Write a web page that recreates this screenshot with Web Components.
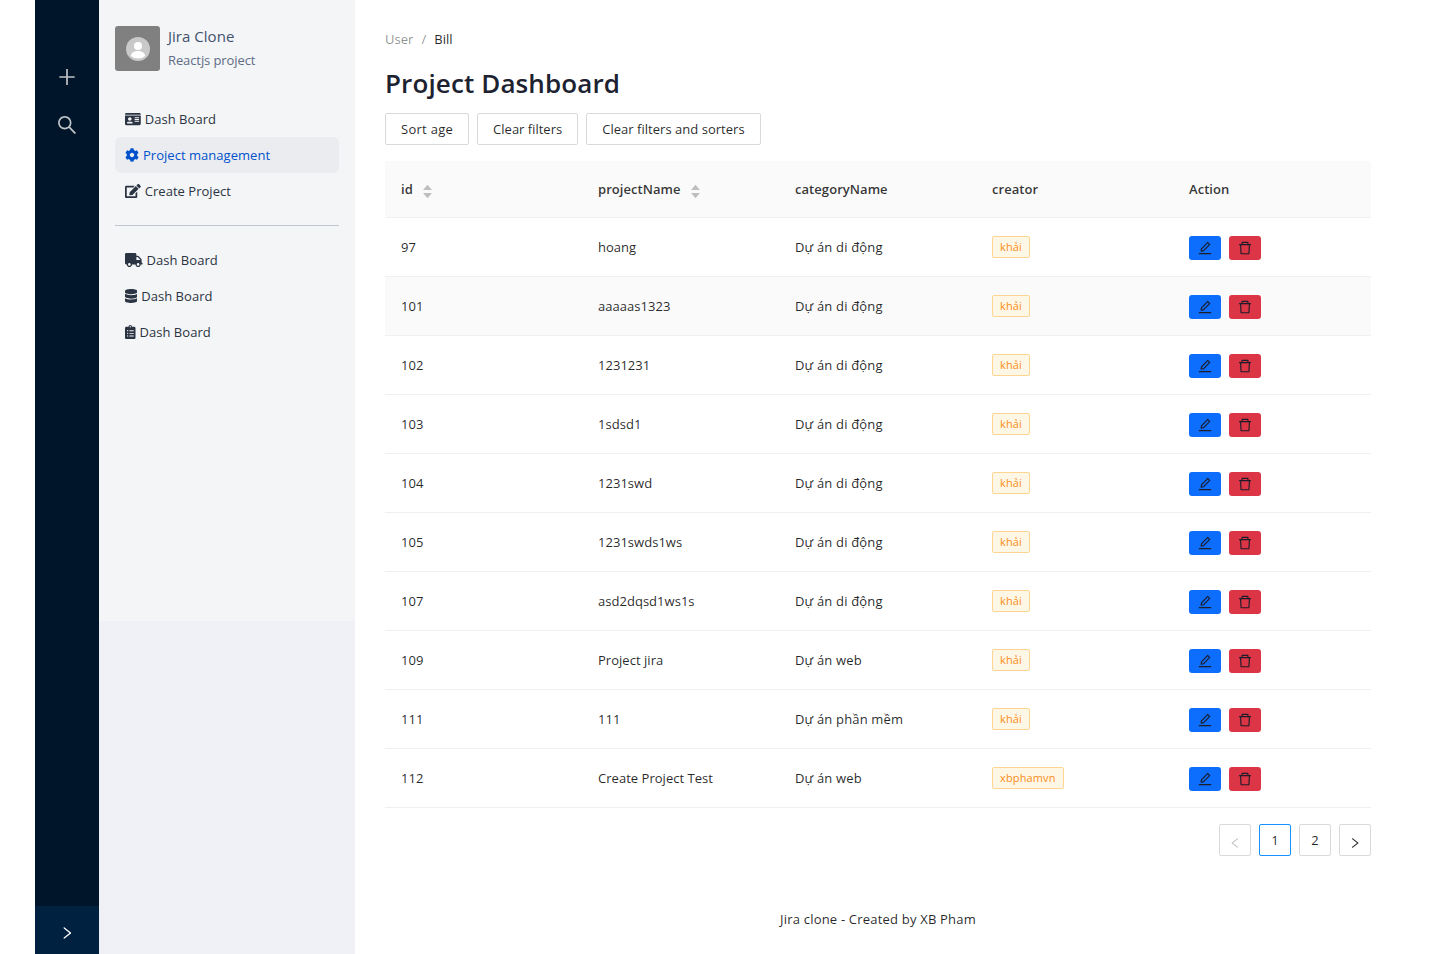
<!DOCTYPE html>
<html lang="vi">
<head>
<meta charset="utf-8">
<title>Jira Clone</title>
<style>
  html, body { margin: 0; height: 100%; background: #fff; }
  body { font-family: "Open Sans", "Noto Sans", sans-serif; font-size: 13px; letter-spacing: .03px; color: rgba(0,0,0,.85); }
</style>
</head>
<body>
<app-shell>
  <icon-rail slot="rail"></icon-rail>
  <side-panel slot="panel"></side-panel>
  <project-dashboard></project-dashboard>
</app-shell>

<script>
const ICONS = {
  idCard: ["0 0 576 512", "M528 32H48C21.5 32 0 53.5 0 80v16h576V80c0-26.5-21.5-48-48-48zM0 432c0 26.5 21.5 48 48 48h480c26.5 0 48-21.5 48-48V128H0v304zm352-232c0-4.4 3.6-8 8-8h144c4.4 0 8 3.6 8 8v16c0 4.4-3.6 8-8 8H360c-4.4 0-8-3.6-8-8v-16zm0 64c0-4.4 3.6-8 8-8h144c4.4 0 8 3.6 8 8v16c0 4.4-3.6 8-8 8H360c-4.4 0-8-3.6-8-8v-16zm0 64c0-4.4 3.6-8 8-8h144c4.4 0 8 3.6 8 8v16c0 4.4-3.6 8-8 8H360c-4.4 0-8-3.6-8-8v-16zM176 192c35.3 0 64 28.7 64 64s-28.7 64-64 64-64-28.7-64-64 28.7-64 64-64zM67.1 396.2C75.5 370.5 99.6 352 128 352h8.2c12.3 5.1 25.7 8 39.8 8s27.6-2.9 39.8-8h8.2c28.4 0 52.5 18.5 60.9 44.2 3.2 9.9-5.2 19.8-15.6 19.8H82.7c-10.4 0-18.8-10-15.6-19.8z"],
  cog: ["0 0 512 512", "M487.4 315.7l-42.6-24.6c4.3-23.2 4.3-47 0-70.2l42.6-24.6c4.9-2.8 7.1-8.6 5.5-14-11.1-35.6-30-67.8-54.7-94.6-3.8-4.1-10-5.1-14.8-2.3L380.8 110c-17.9-15.4-38.5-27.3-60.8-35.1V25.8c0-5.6-3.9-10.5-9.4-11.7-36.7-8.2-74.3-7.8-109.2 0-5.5 1.2-9.4 6.1-9.4 11.7V75c-22.2 7.9-42.8 19.8-60.8 35.1L88.7 85.5c-4.9-2.8-11-1.9-14.8 2.3-24.7 26.7-43.6 58.9-54.7 94.6-1.7 5.4.6 11.2 5.5 14L67.3 221c-4.3 23.2-4.3 47 0 70.2l-42.6 24.6c-4.9 2.8-7.1 8.6-5.5 14 11.1 35.6 30 67.8 54.7 94.6 3.8 4.1 10 5.1 14.8 2.3l42.6-24.6c17.9 15.4 38.5 27.3 60.8 35.1v49.2c0 5.6 3.9 10.5 9.4 11.7 36.7 8.2 74.3 7.8 109.2 0 5.5-1.2 9.4-6.1 9.4-11.7v-49.2c22.2-7.9 42.8-19.8 60.8-35.1l42.6 24.6c4.9 2.8 11 1.9 14.8-2.3 24.7-26.7 43.6-58.9 54.7-94.6 1.5-5.5-.7-11.3-5.6-14.1zM256 336c-44.1 0-80-35.9-80-80s35.9-80 80-80 80 35.9 80 80-35.9 80-80 80z"],
  edit: ["0 0 576 512", "M402.6 83.2l90.2 90.2c3.8 3.8 3.8 10 0 13.8L274.4 405.6l-92.8 10.3c-12.4 1.4-22.9-9.1-21.5-21.5l10.3-92.8L388.8 83.2c3.8-3.8 10-3.8 13.8 0zm162-22.9l-48.8-48.8c-15.2-15.2-39.9-15.2-55.2 0l-35.4 35.4c-3.8 3.8-3.8 10 0 13.8l90.2 90.2c3.8 3.8 10 3.8 13.8 0l35.4-35.4c15.2-15.3 15.2-40 0-55.2zM384 346.2V448H64V128h229.8c3.2 0 6.2-1.3 8.5-3.5l40-40c7.6-7.6 2.2-20.5-8.5-20.5H48C21.5 64 0 85.5 0 112v352c0 26.5 21.5 48 48 48h352c26.5 0 48-21.5 48-48V306.2c0-10.7-12.9-16-20.5-8.5l-40 40c-2.2 2.3-3.5 5.3-3.5 8.5z"],
  truck: ["0 0 640 512", "M624 352h-16V243.9c0-12.7-5.1-24.9-14.1-33.9L494 110.1c-9-9-21.2-14.1-33.9-14.1H416V48c0-26.5-21.5-48-48-48H48C21.5 0 0 21.5 0 48v320c0 26.5 21.5 48 48 48h16c0 53 43 96 96 96s96-43 96-96h128c0 53 43 96 96 96s96-43 96-96h48c8.8 0 16-7.2 16-16v-32c0-8.8-7.2-16-16-16zM160 464c-26.5 0-48-21.5-48-48s21.5-48 48-48 48 21.5 48 48-21.5 48-48 48zm320 0c-26.5 0-48-21.5-48-48s21.5-48 48-48 48 21.5 48 48-21.5 48-48 48zm80-208H416V144h44.1l99.9 99.9V256z"],
  database: ["0 0 448 512", "M448 73.143v45.714C448 159.143 347.667 192 224 192S0 159.143 0 118.857V73.143C0 32.857 100.333 0 224 0s224 32.857 224 73.143zM448 176v102.857C448 319.143 347.667 352 224 352S0 319.143 0 278.857V176c48.125 33.143 136.208 48.572 224 48.572S399.874 209.143 448 176zm0 160v102.857C448 479.143 347.667 512 224 512S0 479.143 0 438.857V336c48.125 33.143 136.208 48.572 224 48.572S399.874 369.143 448 336z"],
  clipboard: ["0 0 384 512", "M336 64h-80c0-35.3-28.7-64-64-64s-64 28.7-64 64H48C21.5 64 0 85.5 0 112v352c0 26.5 21.5 48 48 48h288c26.5 0 48-21.5 48-48V112c0-26.5-21.5-48-48-48zM96 424c-13.3 0-24-10.7-24-24s10.7-24 24-24 24 10.7 24 24-10.7 24-24 24zm0-96c-13.3 0-24-10.7-24-24s10.7-24 24-24 24 10.7 24 24-10.7 24-24 24zm0-96c-13.3 0-24-10.7-24-24s10.7-24 24-24 24 10.7 24 24-10.7 24-24 24zm96-192c13.3 0 24 10.7 24 24s-10.7 24-24 24-24-10.7-24-24 10.7-24 24-24zm128 368c0 4.4-3.6 8-8 8H168c-4.4 0-8-3.6-8-8v-16c0-4.4 3.6-8 8-8h144c4.4 0 8 3.6 8 8v16zm0-96c0 4.4-3.6 8-8 8H168c-4.4 0-8-3.6-8-8v-16c0-4.4 3.6-8 8-8h144c4.4 0 8 3.6 8 8v16zm0-96c0 4.4-3.6 8-8 8H168c-4.4 0-8-3.6-8-8v-16c0-4.4 3.6-8 8-8h144c4.4 0 8 3.6 8 8v16z"],
  plus: ["64 64 896 896", "M482 152h60q8 0 8 8v704q0 8-8 8h-60q-8 0-8-8V160q0-8 8-8zM176 474h672q8 0 8 8v60q0 8-8 8H176q-8 0-8-8v-60q0-8 8-8z"],
  search: ["64 64 896 896", "M909.6 854.5L649.9 594.8C690.2 542.7 712 479 712 412c0-80.2-31.3-155.4-87.9-212.1-56.6-56.7-132-87.9-212.1-87.9s-155.5 31.3-212.1 87.9C143.2 256.5 112 331.8 112 412c0 80.1 31.3 155.5 87.9 212.1C256.5 680.8 331.8 712 412 712c67 0 130.6-21.8 182.7-62l259.7 259.6a8.2 8.2 0 0 0 11.6 0l43.6-43.5a8.2 8.2 0 0 0 0-11.6zM570.4 570.4C528 612.7 471.8 636 412 636s-116-23.3-158.4-65.6C211.3 528 188 471.8 188 412s23.3-116.1 65.6-158.4C296 211.3 352.2 188 412 188s116.1 23.2 158.4 65.6S636 352.2 636 412s-23.3 116.1-65.6 158.4z"],
  right: ["64 64 896 896", "M765.7 486.8L314.9 134.7A7.97 7.97 0 0 0 302 141v77.3c0 4.9 2.3 9.6 6.1 12.6l360 281.1-360 281.1c-3.9 3-6.1 7.7-6.1 12.6V883c0 6.7 7.7 10.4 12.9 6.3l450.8-352.1a31.96 31.96 0 0 0 0-50.4z"],
  left: ["64 64 896 896", "M724 218.3V141c0-6.7-7.7-10.4-12.9-6.3L260.3 486.8a31.86 31.86 0 0 0 0 50.3l450.8 352.1c5.3 4.1 12.9.4 12.9-6.3v-77.3c0-4.9-2.3-9.6-6.1-12.6l-360-281 360-281.1c3.8-3 6.1-7.7 6.1-12.6z"],
  pencil: ["64 64 896 896", "M257.7 752c2 0 4-.2 6-.5L431.9 722c2-.4 3.9-1.3 5.3-2.8l423.9-423.9a9.96 9.96 0 0 0 0-14.1L694.9 114.9c-1.9-1.9-4.4-2.9-7.1-2.9s-5.2 1-7.1 2.9L256.8 538.8c-1.5 1.5-2.4 3.3-2.8 5.3l-29.5 168.2a33.5 33.5 0 0 0 9.4 29.8c6.6 6.4 14.9 9.9 23.8 9.9zm67.4-174.4L687.8 215l73.3 73.3-362.7 362.6-88.9 15.7 15.6-89zM880 836H144c-17.7 0-32 14.3-32 32v36c0 4.4 3.6 8 8 8h784c4.4 0 8-3.6 8-8v-36c0-17.7-14.3-32-32-32z"],
  trash: ["64 64 896 896", "M360 184h-8c4.4 0 8-3.6 8-8v8h304v-8c0 4.4 3.6 8 8 8h-8v72h72v-80c0-35.3-28.7-64-64-64H352c-35.3 0-64 28.7-64 64v80h72v-72zm504 72H160c-17.7 0-32 14.3-32 32v32c0 4.4 3.6 8 8 8h60.4l24.7 523c1.6 34.1 29.8 61 63.9 61h454c34.2 0 62.3-26.8 63.9-61l24.7-523H888c4.4 0 8-3.6 8-8v-32c0-17.7-14.3-32-32-32zM731.3 840H292.7l-24.2-512h487l-24.2 512z"],
  caretUp: ["64 64 896 896", "M858.9 689L530.5 308.2c-9.4-10.9-27.5-10.9-37 0L165.1 689c-12.2 14.2-1.2 35 18.5 35h656.8c19.7 0 30.7-20.8 18.5-35z"],
  caretDown: ["64 64 896 896", "M840.4 300H183.6c-19.7 0-30.7 20.8-18.5 35l328.4 380.8c9.4 10.9 27.5 10.9 37 0L858.9 335c12.2-14.2 1.2-35-18.5-35z"],
};

// height is given, width follows the icon's own proportions
function icon(name, height) {
  const [box, d] = ICONS[name];
  const [, , w, h] = box.split(" ").map(Number);
  return `<svg viewBox="${box}" width="${(height * w) / h}" height="${height}" fill="currentColor" aria-hidden="true"><path d="${d}"/></svg>`;
}

class AppShell extends HTMLElement {
  constructor() {
    super();
    this.attachShadow({ mode: "open" });
    this.shadowRoot.innerHTML = `
      <style>
        :host { display: flex; height: 954px; padding-left: 35px; box-sizing: border-box; overflow: hidden; }
        main { flex: 1; min-width: 0; }
      </style>
      <slot name="rail"></slot>
      <slot name="panel"></slot>
      <main><slot></slot></main>
    `;
  }
}

class IconRail extends HTMLElement {
  constructor() {
    super();
    this.attachShadow({ mode: "open" });
    this.shadowRoot.innerHTML = `
      <style>
        :host { display: flex; flex-direction: column; width: 64px; height: 100%; background: #001529; color: rgba(255,255,255,.75); }
        .tools { flex: 1; display: flex; flex-direction: column; align-items: center; padding-top: 67px; gap: 28px; }
        .tools svg { display: block; }
        .trigger { height: 48px; box-sizing: border-box; padding-top: 6px; background: #002140; color: #fff; display: flex; align-items: center; justify-content: center; }
      </style>
      <div class="tools">${icon("plus", 20)}${icon("search", 20)}</div>
      <div class="trigger">${icon("right", 14)}</div>
    `;
  }
}

class MenuItem extends HTMLElement {
  constructor() {
    super();
    this.attachShadow({ mode: "open" });
  }
  connectedCallback() {
    this.shadowRoot.innerHTML = `
      <style>
        :host { display: flex; align-items: center; gap: 4px; height: 36px; padding-left: 10px; border-radius: 6px; color: #2b3442; white-space: nowrap; }
        :host([active]) { background: #ebecf0; color: #0052cc; }
        svg { flex: none; }
      </style>
      ${icon(this.getAttribute("icon"), 14)}<slot></slot>
    `;
  }
}

class SidePanel extends HTMLElement {
  constructor() {
    super();
    this.attachShadow({ mode: "open" });
    this.shadowRoot.innerHTML = `
      <style>
        :host { display: block; width: 256px; height: 100%; background: #f0f1f6; }
        .inner { height: 621px; box-sizing: border-box; padding: 26px 16px 0; background: #f4f5f7; }
        .brand { display: flex; gap: 8px; height: 45px; margin-bottom: 30px; }
        .avatar { width: 45px; height: 45px; border-radius: 3px; background: #808080; display: flex; align-items: center; justify-content: center; }
        .name { font-size: 15px; line-height: 20px; color: #42526e; }
        .sub { font-size: 13px; line-height: 20px; margin-top: 4px; letter-spacing: -.1px; color: #5e6c84; }
        hr { border: 0; border-top: 1px solid #c1c7d0; margin: 16px 0; }
      </style>
      <div class="inner">
        <div class="brand">
          <div class="avatar">
            <svg width="24" height="24" viewBox="0 0 24 24">
              <circle cx="12" cy="12" r="12" fill="#c9c9c9"/>
              <circle cx="12" cy="9" r="4" fill="#fff"/>
              <path d="M4.8 19c.6-3.6 3.4-5 7.2-5s6.600 1.400 7.200 5c-1.800 1.700-4.400 2.500-7.200 2.500S6.600 20.700 4.800 19z" fill="#fff"/>
            </svg>
          </div>
          <div>
            <div class="name">Jira Clone</div>
            <div class="sub">Reactjs project</div>
          </div>
        </div>
        <menu-item icon="idCard">Dash Board</menu-item>
        <menu-item icon="cog" active>Project management</menu-item>
        <menu-item icon="edit">Create Project</menu-item>
        <hr>
        <menu-item icon="truck">Dash Board</menu-item>
        <menu-item icon="database">Dash Board</menu-item>
        <menu-item icon="clipboard">Dash Board</menu-item>
      </div>
    `;
  }
}

class PlainButton extends HTMLElement {
  constructor() {
    super();
    this.attachShadow({ mode: "open" });
    this.shadowRoot.innerHTML = `
      <style>
        :host { display: inline-flex; align-items: center; height: 32px; box-sizing: border-box; padding: 0 15px; border: 1px solid #d9d9d9; border-radius: 2px; background: #fff; color: rgba(0,0,0,.85); white-space: nowrap; }
      </style>
      <slot></slot>
    `;
  }
}

class ProjectTable extends HTMLElement {
  constructor() {
    super();
    this.attachShadow({ mode: "open" });

    this.rows = [
      [97, "hoang", "Dự án di động", "khải"],
      [101, "aaaaas1323", "Dự án di động", "khải"],
      [102, "1231231", "Dự án di động", "khải"],
      [103, "1sdsd1", "Dự án di động", "khải"],
      [104, "1231swd", "Dự án di động", "khải"],
      [105, "1231swds1ws", "Dự án di động", "khải"],
      [107, "asd2dqsd1ws1s", "Dự án di động", "khải"],
      [109, "Project jira", "Dự án web", "khải"],
      [111, "111", "Dự án phần mềm", "khải"],
      [112, "Create Project Test", "Dự án web", "xbphamvn"],
    ];

    const styles = `
      :host { display: block; }
      .row { display: grid; grid-template-columns: repeat(5, 197px) 1px; height: 59px; box-sizing: border-box; border-bottom: 1px solid #f0f0f0; align-items: center; }
      .row > div { padding-left: 16px; }
      .head { height: 57px; background: #fafafa; font-weight: 600; letter-spacing: .06px; color: rgba(0,0,0,.8); }
      .hover { background: #fafafa; }
      .cat { letter-spacing: .17px; }
      .sortable { display: flex; align-items: center; gap: 9px; }
      .sorter { display: flex; flex-direction: column; color: #bfbfbf; margin-top: 7px; }
      .sorter svg { display: block; margin-top: -3px; }
      .tag { display: inline-block; height: 22px; line-height: 20px; box-sizing: border-box; padding: 0 7px; font-size: 11px; letter-spacing: .14px; color: #fa8c16; background: #fff7e6; border: 1px solid #ffd591; border-radius: 2px; }
      .actions { display: flex; gap: 8px; margin-top: 2px; }
      .btn { width: 32px; height: 24px; border-radius: 3px; display: flex; align-items: center; justify-content: center; color: #1c1c2a; }
      .edit { background: #0d6efd; }
      .del { background: #dc3545; }
    `;

    const sorter = `<span class="sorter">${icon("caretUp", 11)}${icon("caretDown", 11)}</span>`;

    this.shadowRoot.innerHTML = `
      <style>${styles}</style>
      <div class="row head">
        <div class="sortable">id ${sorter}</div>
        <div class="sortable">projectName ${sorter}</div>
        <div>categoryName</div>
        <div>creator</div>
        <div>Action</div>
      </div>
      ${this.renderRows()}
    `;
  }

  renderRows() {
    return this.rows
      .map(
        (row, index) => `
          <div class="row ${index === 1 ? "hover" : ""}">
            <div>${row[0]}</div>
            <div>${row[1]}</div>
            <div class="cat">${row[2]}</div>
            <div><span class="tag">${row[3]}</span></div>
            <div class="actions">
              <span class="btn edit">${icon("pencil", 14)}</span>
              <span class="btn del">${icon("trash", 14)}</span>
            </div>
          </div>
        `
      )
      .join("");
  }
}

class PagerBar extends HTMLElement {
  constructor() {
    super();
    this.attachShadow({ mode: "open" });
    this.shadowRoot.innerHTML = `
      <style>
        :host { display: flex; justify-content: flex-end; gap: 8px; }
        span { width: 32px; height: 32px; box-sizing: border-box; border: 1px solid #d9d9d9; border-radius: 2px; display: flex; align-items: center; justify-content: center; color: rgba(0,0,0,.85); }
        .off { color: rgba(0,0,0,.25); }
        .on { border-color: #1890ff; }
        svg { margin-top: 6px; }
      </style>
      <span class="off">${icon("left", 12)}</span>
      <span class="on">1</span>
      <span>2</span>
      <span>${icon("right", 12)}</span>
    `;
  }
}

class ProjectDashboard extends HTMLElement {
  constructor() {
    super();
    this.attachShadow({ mode: "open" });
    this.shadowRoot.innerHTML = `
      <style>
        :host { display: block; padding: 29px 65px 0 30px; }
        .crumb { display: flex; gap: 8px; line-height: 20px; color: rgba(0,0,0,.45); }
        .crumb b { font-weight: 400; color: rgba(0,0,0,.85); }
        h3 { margin: 14px 0 10px; font-size: 26px; line-height: 40px; font-weight: 600; letter-spacing: .12px; color: #1d2230; }
        .filters { display: flex; gap: 8px; margin-bottom: 16px; }
        project-table { margin-bottom: 16px; }
        footer { margin-top: 53px; text-align: center; line-height: 20px; letter-spacing: .2px; }
      </style>
      <div class="crumb"><span>User</span><span>/</span><b>Bill</b></div>
      <h3>Project Dashboard</h3>
      <div class="filters">
        <plain-button style="letter-spacing:.28px">Sort age</plain-button>
        <plain-button style="letter-spacing:0">Clear filters</plain-button>
        <plain-button>Clear filters and sorters</plain-button>
      </div>
      <project-table></project-table>
      <pager-bar></pager-bar>
      <footer>Jira clone - Created by XB Pham</footer>
    `;
  }
}

customElements.define("menu-item", MenuItem);
customElements.define("icon-rail", IconRail);
customElements.define("side-panel", SidePanel);
customElements.define("plain-button", PlainButton);
customElements.define("project-table", ProjectTable);
customElements.define("pager-bar", PagerBar);
customElements.define("project-dashboard", ProjectDashboard);
customElements.define("app-shell", AppShell);
</script>
</body>
</html>
